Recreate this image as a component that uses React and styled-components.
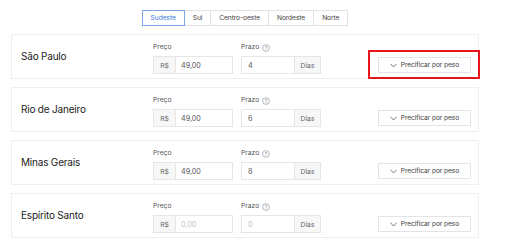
import React from 'react'
import styled, { createGlobalStyle } from 'styled-components'

const regions = ['Sudeste', 'Sul', 'Centro-oeste', 'Nordeste', 'Norte']

const states = [
    { name: 'São Paulo', price: '49,00', days: '4', highlight: true },
    { name: 'Rio de Janeiro', price: '49,00', days: '6' },
    { name: 'Minas Gerais', price: '49,00', days: '8' },
    { name: 'Espírito Santo', price: '', days: '' },
]

const ChevronDown = () => (
    <svg width="7" height="5" viewBox="0 0 7 5" fill="none">
        <path d="M0.5 0.8 L3.5 4 L6.5 0.8" stroke="#555" strokeWidth="0.8" />
    </svg>
)

const HelpIcon = () => (
    <svg width="8" height="8" viewBox="0 0 8 8" fill="none">
        <circle cx="4" cy="4" r="3.4" stroke="#888" strokeWidth="0.6" />
        <text x="4" y="5.7" textAnchor="middle" fontSize="5" fill="#888" fontFamily="Inter, sans-serif">?</text>
    </svg>
)

const App = () => {
    return <>
        <GlobalStyle />
        <Page>
            <Tabs>
                {regions.map((r, i) => (
                    <Tab key={r} active={i === 0}>{r}</Tab>
                ))}
            </Tabs>
            <List>
                {states.map(s => (
                    <Card key={s.name}>
                        <StateName>{s.name}</StateName>
                        <Field>
                            <Label>Preço</Label>
                            <InputGroup>
                                <Addon width={21}>R$</Addon>
                                <Input placeholder="0,00" defaultValue={s.price} pad={6} />
                            </InputGroup>
                        </Field>
                        <Field>
                            <Label>Prazo <HelpIcon /></Label>
                            <InputGroup>
                                <Input placeholder="0" defaultValue={s.days} pad={7} />
                                <Addon width={25} right>Dias</Addon>
                            </InputGroup>
                        </Field>
                        <ButtonWrap highlight={s.highlight}>
                            <Button>
                                <ChevronDown />
                                Precificar por peso
                            </Button>
                        </ButtonWrap>
                    </Card>
                ))}
            </List>
        </Page>
    </>
}

const GlobalStyle = createGlobalStyle`
    body {
        margin: 0;
        background: #fff;
        font-family: Inter, "Noto Sans", sans-serif;
    }
`

const Page = styled.div`
    width: 468px;
    padding: 10px 0 0 11px;
`

const Tabs = styled.div`
    display: flex;
    justify-content: center;
    margin-bottom: 8px;
    padding-left: 1px;
`

const Tab = styled.div`
    height: 16px;
    box-sizing: border-box;
    padding: 0 8px;
    display: flex;
    align-items: center;
    font-size: 6.7px;
    letter-spacing: -0.1px;
    color: ${p => p.active ? '#3c78d8' : '#444'};
    border: 1px solid ${p => p.active ? '#7fa6e6' : '#e2e2e2'};
    margin-left: -1px;
    position: relative;
    z-index: ${p => p.active ? 1 : 0};
`

const List = styled.div`
    display: flex;
    flex-direction: column;
    gap: 8px;
`

const Card = styled.div`
    height: 45px;
    box-sizing: border-box;
    border: 1px solid #efefef;
    display: flex;
    align-items: flex-end;
    padding: 0 7px 4px 9px;
`

const StateName = styled.div`
    width: 132px;
    align-self: center;
    margin-top: 3px;
    font-size: 10px;
    letter-spacing: -0.2px;
    color: #222;
`

const Field = styled.div`
    display: flex;
    flex-direction: column;
    margin-right: 8px;
`

const Label = styled.div`
    display: flex;
    align-items: center;
    gap: 3px;
    font-size: 6.7px;
    line-height: 9px;
    color: #555;
    margin-bottom: 4px;
`

const InputGroup = styled.div`
    display: flex;
    width: 80px;
    height: 18px;
    box-sizing: border-box;
    border: 1px solid #e6e6e6;
`

const Addon = styled.div`
    width: ${p => p.width}px;
    flex-shrink: 0;
    display: flex;
    align-items: center;
    justify-content: center;
    background: #f7f7f7;
    font-size: 6.8px;
    color: #666;
    ${p => p.right ? 'border-left: 1px solid #e6e6e6;' : 'border-right: 1px solid #e6e6e6;'}
`

const Input = styled.input`
    flex: 1;
    min-width: 0;
    border: none;
    outline: none;
    padding: 0 0 0 ${p => p.pad - 1}px;
    font-family: inherit;
    font-size: 7.2px;
    color: #555;
    background: #fff;

    &::placeholder {
        color: #c4c4c4;
    }
`

const ButtonWrap = styled.div`
    margin-left: auto;
    position: relative;
    margin-bottom: 1px;

    &::after {
        content: '';
        display: ${p => p.highlight ? 'block' : 'none'};
        position: absolute;
        top: -7px;
        left: -10px;
        right: -9px;
        bottom: -6px;
        border: 2px solid #e8141c;
        pointer-events: none;
    }
`

const Button = styled.button`
    width: 93px;
    height: 16px;
    box-sizing: border-box;
    display: flex;
    align-items: center;
    justify-content: center;
    gap: 4px;
    background: #fff;
    border: 1px solid #e4e4e4;
    font-family: inherit;
    font-size: 6.7px;
    letter-spacing: -0.1px;
    color: #444;
    padding: 0 0 0 0;
`

export default App
